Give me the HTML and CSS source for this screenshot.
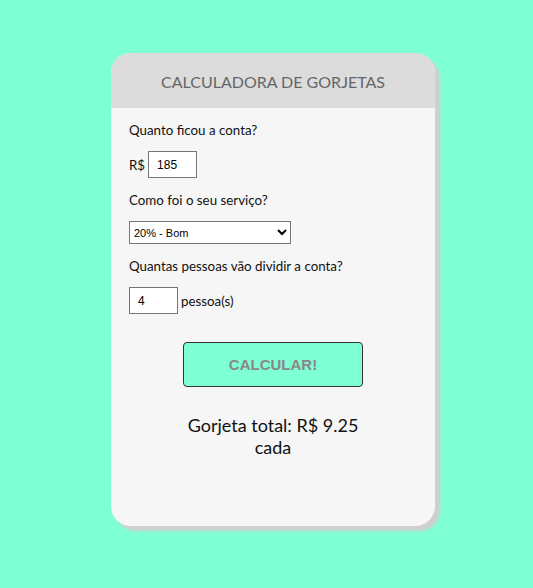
FILE: index.html
```html
<!DOCTYPE html>
<html lang="pt-BR">
<head>
<meta charset="utf-8">
<title>Calculadora de Gorjetas</title>
<link rel="stylesheet" href="styles.css">
</head>
<body>
<div class="card">
  <div class="card-header">CALCULADORA DE GORJETAS</div>
  <div class="card-body">
    <p class="label">Quanto ficou a conta?</p>
    <div class="row">
      <span class="prefix">R$</span>
      <input class="field" type="text" value="185">
    </div>
    <p class="label">Como foi o seu serviço?</p>
    <div class="row">
      <select class="select">
        <option>20% - Bom</option>
      </select>
    </div>
    <p class="label">Quantas pessoas vão dividir a conta?</p>
    <div class="row row-people">
      <input class="field" type="text" value="4">
      <span class="suffix">pessoa(s)</span>
    </div>
    <div class="actions">
      <button class="btn" type="button">CALCULAR!</button>
    </div>
    <div class="result">
      <div>Gorjeta total: R$ 9.25</div>
      <div>cada</div>
    </div>
  </div>
</div>
</body>
</html>
```

FILE: styles.css
```css
html, body {
  margin: 0;
  padding: 0;
}
body {
  background: #7fffd4;
  font-family: Lato, "Open Sans", sans-serif;
  color: #111;
  min-height: 588px;
}
.card {
  margin: 53px 0 0 111px;
  width: 324px;
  height: 473px;
  background: #f6f6f6;
  border-radius: 20px;
  box-shadow: 5px 5px 3px #d0d0d0;
  overflow: hidden;
  display: flex;
  flex-direction: column;
}
.card-header {
  height: 55px;
  background: #dcdcdc;
  color: #666;
  font-size: 16px;
  display: flex;
  align-items: center;
  justify-content: center;
  padding-top: 1px;
  box-sizing: border-box;
}
.card-body {
  padding: 13px 18px 0 18px;
}
.label {
  margin: 0;
  font-size: 13.33px;
  line-height: 18px;
}
.row {
  display: flex;
  align-items: center;
  gap: 3px;
  font-size: 13.33px;
  margin-top: 12px;
  margin-bottom: 13px;
}
.row-people {
  margin-top: 12px;
  margin-bottom: 0;
}
.field {
  box-sizing: border-box;
  width: 49px;
  height: 27px;
  border: 1px solid #767676;
  border-radius: 0;
  padding: 0 8px;
  font-family: "Liberation Sans", Arial, sans-serif;
  font-size: 12px;
  color: #000;
  background: #fff;
  margin: 0;
}
.select {
  box-sizing: border-box;
  width: 162px;
  height: 23px;
  border: 1px solid #767676;
  border-radius: 0;
  background: #fff;
  font-family: "Liberation Sans", Arial, sans-serif;
  font-size: 11px;
  color: #000;
  margin: 0;
}
.actions {
  display: flex;
  margin-top: 28px;
  padding-left: 54px;
}
.btn {
  box-sizing: border-box;
  width: 180px;
  height: 45px;
  background: #7fffd4;
  border: 1px solid #333;
  border-radius: 4px;
  color: #888;
  font-family: "Liberation Sans", Arial, sans-serif;
  font-weight: bold;
  font-size: 15px;
  cursor: pointer;
}
.result {
  margin-top: 27px;
  text-align: center;
  font-size: 18px;
  line-height: 22px;
}
```
